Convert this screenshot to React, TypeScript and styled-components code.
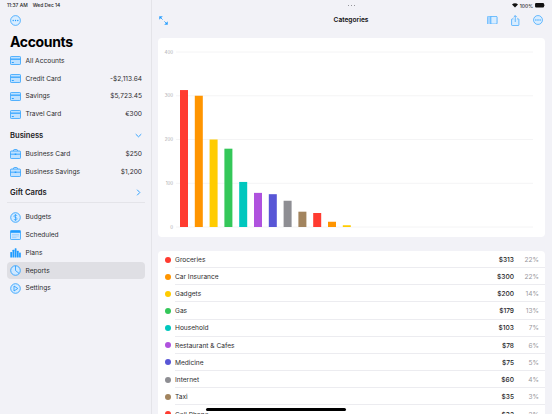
import React from 'react';
import styled, { createGlobalStyle } from 'styled-components';

const BLUE = '#1f9bff';

const GlobalStyle = createGlobalStyle`
  html, body { margin: 0; padding: 0; background: #f2f2f7; }
  body { font-family: Inter, "Liberation Sans", sans-serif; color: #1c1c1e; }
  * { box-sizing: border-box; }
`;

const Page = styled.div`
  position: relative;
  width: 552px;
  height: 414px;
  overflow: hidden;
  display: flex;
  background: #f2f2f7;
`;

const Sidebar = styled.aside`
  width: 152px;
  flex: none;
  border-right: 1px solid #e4e4e9;
  padding: 0 6px 0 7px;
  display: flex;
  flex-direction: column;
`;

const StatusText = styled.div`
  height: 11px;
  font-size: 4.9px;
  font-weight: 500;
  line-height: 11px;
  display: flex;
  gap: 5px;
  color: #1c1c1e;
`;

const TopIcon = styled.div`
  height: 18px;
  padding-left: 3px;
  display: flex;
  align-items: center;
`;

const Title = styled.h1`
  margin: 3px 0 0 3px;
  font-size: 14px;
  letter-spacing: -0.35px;
  line-height: 19px;
  font-weight: 700;
  color: #000;
`;

const Rows = styled.div`
  margin-top: 1px;
  display: flex;
  flex-direction: column;
`;

const Row = styled.div<{ $active?: boolean }>`
  height: 17.8px;
  padding: 0 3px;
  display: flex;
  align-items: center;
  gap: 4.5px;
  border-radius: 4px;
  font-size: 6.6px;
  color: #2c2c2e;
  background: ${props => (props.$active ? '#dfdfe4' : 'transparent')};
`;

const RowLabel = styled.span`
  flex: 1;
`;

const SectionHead = styled.div<{ $mt: number }>`
  margin-top: ${props => props.$mt}px;
  height: 18px;
  padding: 0 3px;
  display: flex;
  align-items: center;
  justify-content: space-between;
  font-size: 7.6px;
  font-weight: 600;
  color: #1c1c1e;
`;

const Divider = styled.div`
  height: 1px;
  margin: 0 0 4.5px;
  background: #e4e4e9;
`;

const Main = styled.main`
  flex: 1;
  min-width: 0;
  padding: 0 7px 0 6px;
  display: flex;
  flex-direction: column;
`;

const Grabber = styled.div`
  height: 11px;
  flex: none;
  display: flex;
  align-items: center;
  justify-content: center;
  gap: 1.2px;
`;

const Dot = styled.span`
  width: 1.8px;
  height: 1.8px;
  border-radius: 50%;
  background: #77777c;
`;

const StatusRight = styled.div`
  position: absolute;
  top: 2px;
  right: 7px;
  height: 7px;
  display: flex;
  align-items: center;
  gap: 2px;
  font-size: 4.9px;
  font-weight: 500;
`;

const Toolbar = styled.div`
  height: 18px;
  flex: none;
  margin-bottom: 9px;
  padding: 0 2px 0 1px;
  display: flex;
  align-items: center;
  justify-content: space-between;
`;

const ToolbarTitle = styled.div`
  font-size: 6.6px;
  font-weight: 600;
  color: #111;
`;

const ToolbarGroup = styled.div<{ $end?: boolean }>`
  flex: 1;
  display: flex;
  align-items: center;
  justify-content: ${props => (props.$end ? 'flex-end' : 'flex-start')};
  gap: 13.5px;
`;

const Card = styled.section`
  background: #fff;
  border-radius: 4px;
  flex: none;
`;

const ChartCard = styled(Card)`
  height: 199px;
  margin-bottom: 14px;
`;

const ListRow = styled.div`
  height: 17.15px;
  display: flex;
  align-items: center;
  padding-left: 7px;
  font-size: 6.6px;
  color: #2c2c2e;
`;

const ColorDot = styled.span<{ $color: string }>`
  width: 6px;
  height: 6px;
  border-radius: 50%;
  flex: none;
  background: ${props => props.$color};
`;

const ListBody = styled.div<{ $last?: boolean }>`
  flex: 1;
  height: 100%;
  margin-left: 4px;
  padding: 1.5px 6px 0 0;
  display: flex;
  align-items: center;
  border-bottom: ${props => (props.$last ? 'none' : '0.6px solid #ececf0')};
`;

const ListName = styled.span`
  flex: 1;
`;

const ListAmount = styled.span`
  font-weight: 500;
  color: #1c1c1e;
`;

const ListPct = styled.span`
  width: 25px;
  text-align: right;
  color: #98989d;
`;

const HomeBar = styled.div`
  position: absolute;
  left: 206px;
  bottom: 3.5px;
  width: 140px;
  height: 2.2px;
  border-radius: 2px;
  background: #000;
`;

const CardIcon = () => (
  <svg width="11" height="9" viewBox="0 0 11 9">
    <rect x="0.4" y="0.4" width="10.2" height="8.2" rx="1.2" fill="#bfe1ff" stroke={BLUE} strokeWidth="0.8" />
    <rect x="0.8" y="2.6" width="9.4" height="1.1" fill={BLUE} />
    <rect x="1.8" y="6" width="2" height="0.9" fill={BLUE} />
  </svg>
);

const CaseIcon = () => (
  <svg width="11" height="10" viewBox="0 0 11 10">
    <path d="M3.6 2V1.2c0-.4.3-.7.7-.7h2.4c.4 0 .7.3.7.7V2" fill="none" stroke={BLUE} strokeWidth="0.8" />
    <rect x="0.4" y="2" width="10.2" height="7.6" rx="1.2" fill="#bfe1ff" stroke={BLUE} strokeWidth="0.8" />
    <path d="M0.6 5.2h9.8" stroke={BLUE} strokeWidth="0.8" />
    <rect x="4.7" y="4.6" width="1.6" height="1.3" fill={BLUE} />
  </svg>
);

const DollarIcon = () => (
  <svg width="11" height="11" viewBox="0 0 11 11">
    <circle cx="5.5" cy="5.5" r="4.8" fill="#d5ebff" stroke={BLUE} strokeWidth="0.8" />
    <path d="M7 3.9C6.7 3.2 6.1 3 5.5 3 4.7 3 4 3.4 4 4.2s.7 1 1.5 1.3 1.6.5 1.6 1.3S6.4 8 5.5 8C4.8 8 4.2 7.7 3.9 7M5.5 2.2v6.6" fill="none" stroke={BLUE} strokeWidth="0.7" />
  </svg>
);

const CalendarIcon = () => (
  <svg width="11" height="10" viewBox="0 0 11 10">
    <rect x="0.4" y="0.4" width="10.2" height="9.2" rx="1.2" fill="#cfe8ff" stroke={BLUE} strokeWidth="0.8" />
    <rect x="0.6" y="0.6" width="9.8" height="2.2" fill={BLUE} />
    <path d="M2 4.5h7M2 6h7M2 7.6h4.5" stroke="#8ec8ff" strokeWidth="0.7" />
  </svg>
);

const BarsIcon = () => (
  <svg width="11" height="10" viewBox="0 0 11 10">
    <g fill={BLUE}>
      <rect x="0.3" y="4" width="1.8" height="5.6" rx="0.4" />
      <rect x="2.5" y="1.8" width="1.8" height="7.8" rx="0.4" />
      <rect x="4.7" y="0.3" width="1.8" height="9.3" rx="0.4" />
      <rect x="6.9" y="2.8" width="1.8" height="6.8" rx="0.4" />
      <rect x="9.1" y="4.6" width="1.7" height="5" rx="0.4" />
    </g>
  </svg>
);

const PieIcon = () => (
  <svg width="11" height="11" viewBox="0 0 11 11">
    <circle cx="5.5" cy="5.5" r="4.8" fill="#cfe8ff" stroke={BLUE} strokeWidth="0.8" />
    <path d="M5.5 5.5V.9M5.5 5.5l3.6 2.9" stroke={BLUE} strokeWidth="0.8" fill="none" />
  </svg>
);

const PlayIcon = () => (
  <svg width="11" height="11" viewBox="0 0 11 11">
    <circle cx="5.5" cy="5.5" r="4.8" fill="#d5ebff" stroke={BLUE} strokeWidth="0.8" />
    <path d="M4 3l3.8 2.5L4 8z" fill="none" stroke={BLUE} strokeWidth="0.8" strokeLinejoin="round" />
  </svg>
);

const MoreIcon = ({ size = 11 }: { size?: number }) => (
  <svg width={size} height={size} viewBox="0 0 11 11">
    <circle cx="5.5" cy="5.5" r="4.9" fill="#d9edff" stroke={BLUE} strokeWidth="0.7" />
    <circle cx="3.2" cy="5.5" r="0.7" fill={BLUE} />
    <circle cx="5.5" cy="5.5" r="0.7" fill={BLUE} />
    <circle cx="7.8" cy="5.5" r="0.7" fill={BLUE} />
  </svg>
);

const ExpandIcon = () => (
  <svg width="9" height="9" viewBox="0 0 10 10">
    <path d="M.5.5h3.2L.5 3.7zM9.5 9.5H6.3l3.2-3.2z" fill={BLUE} stroke={BLUE} strokeWidth="0.4" strokeLinejoin="round" />
    <path d="M2 2l2 2M8 8L6 6" stroke={BLUE} strokeWidth="0.9" />
  </svg>
);

const SidebarIcon = () => (
  <svg width="10.5" height="8.5" viewBox="0 0 11 9">
    <rect x="0.4" y="0.4" width="10.2" height="8.2" rx="1" fill="#d9edff" stroke={BLUE} strokeWidth="0.7" />
    <rect x="0.7" y="0.7" width="3.3" height="7.6" fill="#a8d5ff" />
    <path d="M4 .5v8" stroke={BLUE} strokeWidth="0.7" />
  </svg>
);

const ShareIcon = () => (
  <svg width="8.5" height="11" viewBox="0 0 9 12">
    <path d="M2.6 4.2H1.2c-.4 0-.7.3-.7.7v5.9c0 .4.3.7.7.7h6.6c.4 0 .7-.3.7-.7V4.9c0-.4-.3-.7-.7-.7H6.4" fill="#d9edff" stroke={BLUE} strokeWidth="0.7" />
    <path d="M4.5 7.6V.7M2.7 2.4L4.5.6l1.8 1.8" fill="none" stroke={BLUE} strokeWidth="0.7" />
  </svg>
);

const Chevron = ({ dir }: { dir: 'down' | 'right' }) => (
  <svg width="7" height="7" viewBox="0 0 7 7">
    <path
      d={dir === 'down' ? 'M1 2.4l2.5 2.4L6 2.4' : 'M2.4 1l2.4 2.5L2.4 6'}
      fill="none"
      stroke={BLUE}
      strokeWidth="0.9"
      strokeLinecap="round"
      strokeLinejoin="round"
    />
  </svg>
);

const WifiIcon = () => (
  <svg width="6" height="4.5" viewBox="0 0 7 5">
    <path d="M3.5 5L0 1.6C2-.4 5-.4 7 1.6z" fill="#111" />
  </svg>
);

const BatteryIcon = () => (
  <svg width="10" height="4.5" viewBox="0 0 11 5">
    <rect x="0" y="0" width="10" height="5" rx="1.2" fill="#111" />
    <rect x="10.2" y="1.6" width="0.8" height="1.8" rx="0.3" fill="#777" />
  </svg>
);

const categories = [
  { name: 'Groceries', amount: 313, pct: 22, color: '#ff3b30' },
  { name: 'Car Insurance', amount: 300, pct: 22, color: '#ff9500' },
  { name: 'Gadgets', amount: 200, pct: 14, color: '#ffcc00' },
  { name: 'Gas', amount: 179, pct: 13, color: '#34c759' },
  { name: 'Household', amount: 103, pct: 7, color: '#00c7be' },
  { name: 'Restaurant & Cafes', amount: 78, pct: 6, color: '#af52de' },
  { name: 'Medicine', amount: 75, pct: 5, color: '#5856d6' },
  { name: 'Internet', amount: 60, pct: 4, color: '#8e8e93' },
  { name: 'Taxi', amount: 35, pct: 3, color: '#a2845e' },
  { name: 'Cell Phone', amount: 32, pct: 2, color: '#ff3b30' },
];

const extraBars = [
  { amount: 12, color: '#ff9500' },
  { amount: 4, color: '#ffcc00' },
];

const accounts = [
  { name: 'All Accounts' },
  { name: 'Credit Card', value: '-$2,113.64' },
  { name: 'Savings', value: '$5,723.45' },
  { name: 'Travel Card', value: '€300' },
];

const nav = [
  { name: 'Budgets', icon: <DollarIcon /> },
  { name: 'Scheduled', icon: <CalendarIcon /> },
  { name: 'Plans', icon: <BarsIcon /> },
  { name: 'Reports', icon: <PieIcon />, active: true },
  { name: 'Settings', icon: <PlayIcon /> },
];

// chart coordinates are relative to the white card (158,38)
const BarChart = () => {
  const bars = [...categories, ...extraBars];
  const zeroY = 189;
  const scale = 43.75 / 100;
  return (
    <svg width="387" height="199" viewBox="0 0 387 199">
      {[0, 100, 200, 300, 400].map(v => (
        <g key={v}>
          <line x1="18" x2="375" y1={zeroY - v * scale} y2={zeroY - v * scale} stroke="#f1f1f3" strokeWidth="0.8" />
          <text x="15" y={zeroY - v * scale + 1.6} fontSize="4.4" fill="#a5a5a9" textAnchor="end">
            {v}
          </text>
        </g>
      ))}
      {bars.map((b, i) => {
        const h = b.amount * scale;
        return <rect key={i} x={22 + i * 14.8} y={zeroY - h} width="8" height={h} fill={b.color} />;
      })}
    </svg>
  );
};

export default function App() {
  return (
    <Page>
      <GlobalStyle />
      <Sidebar>
        <StatusText>
          <span>11:37 AM</span>
          <span>Wed Dec 14</span>
        </StatusText>
        <TopIcon>
          <MoreIcon size={11} />
        </TopIcon>
        <Title>Accounts</Title>
        <Rows>
          {accounts.map(a => (
            <Row key={a.name}>
              <CardIcon />
              <RowLabel>{a.name}</RowLabel>
              {a.value && <span>{a.value}</span>}
            </Row>
          ))}
        </Rows>
        <SectionHead $mt={3}>
          Business
          <Chevron dir="down" />
        </SectionHead>
        <Rows>
          <Row>
            <CaseIcon />
            <RowLabel>Business Card</RowLabel>
            <span>$250</span>
          </Row>
          <Row>
            <CaseIcon />
            <RowLabel>Business Savings</RowLabel>
            <span>$1,200</span>
          </Row>
        </Rows>
        <SectionHead $mt={3}>
          Gift Cards
          <Chevron dir="right" />
        </SectionHead>
        <Divider />
        <Rows>
          {nav.map(n => (
            <Row key={n.name} $active={n.active}>
              {n.icon}
              <RowLabel>{n.name}</RowLabel>
            </Row>
          ))}
        </Rows>
      </Sidebar>
      <Main>
        <Grabber>
          <Dot />
          <Dot />
          <Dot />
        </Grabber>
        <Toolbar>
          <ToolbarGroup>
            <ExpandIcon />
          </ToolbarGroup>
          <ToolbarTitle>Categories</ToolbarTitle>
          <ToolbarGroup $end>
            <SidebarIcon />
            <ShareIcon />
            <MoreIcon size={10} />
          </ToolbarGroup>
        </Toolbar>
        <ChartCard>
          <BarChart />
        </ChartCard>
        <Card>
          {categories.map((c, i) => (
            <ListRow key={c.name}>
              <ColorDot $color={c.color} />
              <ListBody $last={i === categories.length - 1}>
                <ListName>{c.name}</ListName>
                <ListAmount>${c.amount}</ListAmount>
                <ListPct>{c.pct}%</ListPct>
              </ListBody>
            </ListRow>
          ))}
        </Card>
      </Main>
      <StatusRight>
        <WifiIcon />
        <span>100%</span>
        <BatteryIcon />
      </StatusRight>
      <HomeBar />
    </Page>
  );
}
